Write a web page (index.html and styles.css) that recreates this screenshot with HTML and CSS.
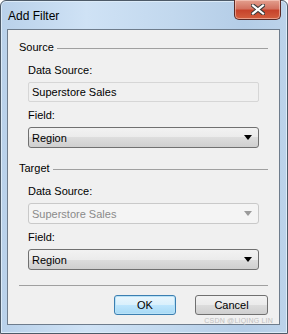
FILE: index.html
```html
<!DOCTYPE html>
<html lang="en">
<head>
  <meta charset="UTF-8" />
  <title>Add Filter</title>
  <link rel="stylesheet" href="styles.css">
</head>
<body>
  <div class="window">
    <div class="titlebar">
      <span class="title">Add Filter</span>
      <button class="close-btn" title="Close">
        <svg width="14" height="11" viewBox="0 0 14 11">
          <path d="M2 1.5 L12 9.5 M12 1.5 L2 9.5" stroke="#3a3a3a" stroke-width="4.2" stroke-linecap="square"/>
          <path d="M2 1.5 L12 9.5 M12 1.5 L2 9.5" stroke="#ffffff" stroke-width="2.2" stroke-linecap="square"/>
        </svg>
      </button>
    </div>

    <div class="client">
      <!-- Source -->
      <div class="group-head">
        <span>Source</span>
        <span class="group-line"></span>
      </div>
      <div class="fields">
        <label class="lbl first">Data Source:</label>
        <div class="textbox">Superstore Sales</div>
        <label class="lbl">Field:</label>
        <div class="combo"><span>Region</span><span class="arrow"></span></div>
      </div>

      <!-- Target -->
      <div class="group-head target">
        <span>Target</span>
        <span class="group-line"></span>
      </div>
      <div class="fields">
        <label class="lbl first">Data Source:</label>
        <div class="combo disabled"><span>Superstore Sales</span><span class="arrow"></span></div>
        <label class="lbl">Field:</label>
        <div class="combo"><span>Region</span><span class="arrow"></span></div>
      </div>

      <div class="separator"></div>

      <div class="buttons">
        <button class="btn default">OK</button>
        <button class="btn">Cancel</button>
      </div>
      <div class="watermark">CSDN @LIQING LIN</div>
    </div>
  </div>
</body>
</html>
```

FILE: styles.css
```css
body {
  margin: 0;
  font-family: "Liberation Sans", Arial, sans-serif;
  font-size: 11px;
  color: #000;
  background: #fff;
}

.window {
  width: 288px;
  height: 334px;
  box-sizing: border-box;
  border: 1px solid #4d5a68;
  border-radius: 6px 6px 0 0;
  background: linear-gradient(to right, #b9d1ea 0%, #cfe2f5 30%, #c2d8ee 60%, #b4cde7 85%, #bcd3ea 100%);
  display: flex;
  flex-direction: column;
  box-shadow: inset 0 0 0 1px #dcebf8;
}

.titlebar {
  height: 28px;
  display: flex;
  align-items: flex-start;
  padding-left: 7px;
}

.title {
  font-size: 12px;
  margin-top: 8px;
  color: #000;
}

.close-btn {
  margin-left: auto;
  margin-right: 6px;
  margin-top: -1px;
  width: 47px;
  height: 20px;
  border: 1px solid #5b2a26;
  border-top: none;
  border-radius: 0 0 5px 5px;
  background: linear-gradient(to bottom, #e3a08f 0%, #d37361 45%, #c7432b 55%, #d35f3e 100%);
  box-shadow: inset 0 0 0 1px rgba(255, 220, 210, 0.5);
  display: flex;
  align-items: center;
  justify-content: center;
  padding: 0;
}

.client {
  margin: 0 7px 8px 6px;
  flex: 1;
  border: 1px solid #6e7c8c;
  background: #f0f0f0;
  display: flex;
  flex-direction: column;
  padding: 0 11px 0 11px;
}

.group-head {
  display: flex;
  align-items: center;
  margin-top: 10px;
  height: 15px;
  line-height: 15px;
}

.group-head.target {
  margin-top: 13px;
}

.group-line {
  flex: 1;
  height: 1px;
  background: #a0a0a0;
  margin-left: 3px;
  margin-top: 1px;
}

.fields {
  display: flex;
  flex-direction: column;
  padding: 0 9px 0 9px;
}

.lbl {
  line-height: 15px;
  margin-top: 6px;
  margin-bottom: 4px;
}

.lbl.first {
  margin-top: 8px;
}

.textbox {
  height: 18px;
  line-height: 18px;
  border: 1px solid #d6d6d6;
  border-radius: 2px;
  background: #f0f0f0;
  padding-left: 3px;
}

.combo {
  height: 19px;
  border: 1px solid #707070;
  border-radius: 3px;
  background: linear-gradient(to bottom, #f2f2f2 0%, #ebebeb 50%, #dddddd 50%, #cfcfcf 100%);
  display: flex;
  align-items: center;
  justify-content: space-between;
  padding: 0 6px 0 3px;
}

.combo.disabled {
  border-color: #c9c9c9;
  background: #f4f4f4;
  color: #8a8a8a;
}

.arrow {
  width: 0;
  height: 0;
  border-left: 4px solid transparent;
  border-right: 4px solid transparent;
  border-top: 5px solid #000;
}

.combo.disabled .arrow {
  border-top-color: #9a9a9a;
}

.separator {
  height: 1px;
  background: #a0a0a0;
  margin-top: 15px;
}

.buttons {
  display: flex;
  justify-content: flex-end;
  gap: 19px;
  margin-top: 9px;
}

.btn {
  width: 62px;
  height: 20px;
  font-family: "Liberation Sans", Arial, sans-serif;
  font-size: 11px;
  border: 1px solid #707070;
  border-radius: 3px;
  background: linear-gradient(to bottom, #f2f2f2 0%, #ebebeb 50%, #dddddd 50%, #cfcfcf 100%);
  padding: 0;
}

.btn + .btn {
  width: 73px;
}

.btn.default {
  border-color: #3c7fb1;
  background: linear-gradient(to bottom, #eaf6fd 0%, #d9f0fc 50%, #bee6fd 50%, #a7d9f5 100%);
  box-shadow: inset 0 0 0 1px #b9e2f7;
}

.watermark {
  align-self: flex-end;
  font-size: 7px;
  color: #c0c0c0;
  margin-top: 2px;
  margin-right: -5px;
  letter-spacing: 0.2px;
}
```
